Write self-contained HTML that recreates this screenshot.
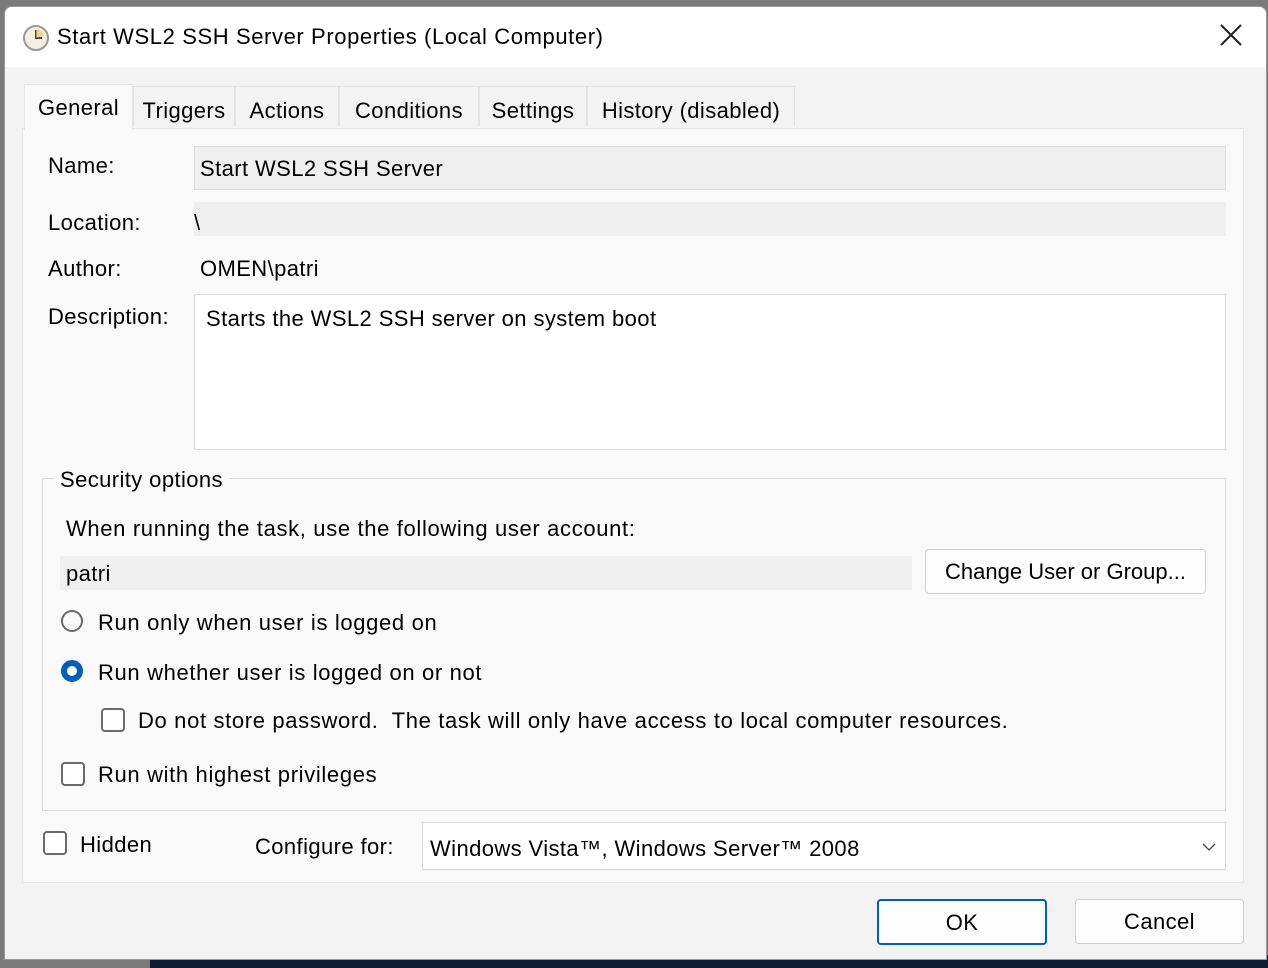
<!DOCTYPE html><html><head><style>
body{margin:0;width:1268px;height:968px;overflow:hidden;background:#7a7a7a;font-family:"Liberation Sans",sans-serif;font-size:22px;color:#000;position:relative;letter-spacing:0.4px}
.a{position:absolute}
#win{left:4px;top:6px;width:1261px;height:952px;background:#f3f3f3;border-radius:8px 8px 0 0;border:1px solid #999;overflow:hidden}
#title{left:0;top:0;width:1261px;height:60px;background:#fff}
.tab{top:86px;height:40px;background:#f3f3f3;border:1px solid #e3e3e3;border-bottom:none;line-height:48px;text-align:center;white-space:nowrap;box-sizing:border-box}
#panel{left:22px;top:128px;width:1220px;height:753px;background:#f9f9f9;border:1px solid #e6e6e6}
.ro{background:#efefef}
.box{background:#fff;border:1px solid #d9d9d9}
.btn{background:#fdfdfd;border:1px solid #d0d0d0;border-radius:4px;text-align:center}
.rad{width:22px;height:22px;border:2px solid #6a6a6a;border-radius:50%;box-sizing:border-box}
.chk{width:24px;height:24px;border:2px solid #6a6a6a;border-radius:4px;box-sizing:border-box;background:#fff}
.s{letter-spacing:0.65px}
</style></head><body>
<div class="a" style="left:150px;top:955px;width:1118px;height:13px;background:#0d1b33"></div>
<div id="win" class="a">
<div id="title" class="a"></div>
</div>
<svg class="a" style="left:22px;top:24px" width="28" height="28"><circle cx="14" cy="14" r="12" fill="#f4efe0" stroke="#999" stroke-width="2"/><path d="M14 6V14H20" stroke="#444" stroke-width="2" fill="none"/><path d="M14 14L14 5A9 9 0 0 1 22 12Z" fill="#e8c25a" opacity=".6"/></svg>
<div class="a" style="left:57px;top:24px;letter-spacing:0.6px">Start WSL2 SSH Server Properties (Local Computer)</div>
<svg class="a" style="left:1220px;top:24px" width="22" height="22"><path d="M1 1L21 21M21 1L1 21" stroke="#222" stroke-width="2"/></svg>
<div id="panel" class="a"></div>
<div class="a tab" style="left:133px;width:102px">Triggers</div>
<div class="a tab" style="left:235px;width:104px">Actions</div>
<div class="a tab" style="left:339px;width:140px">Conditions</div>
<div class="a tab" style="left:479px;width:108px">Settings</div>
<div class="a tab" style="left:587px;width:208px">History (disabled)</div>
<div class="a tab" style="left:24px;top:84px;width:109px;height:46px;background:#f9f9f9;line-height:46px;border-color:#e6e6e6">General</div>
<div class="a" style="left:48px;top:153px">Name:</div>
<div class="a ro" style="left:194px;top:146px;width:1030px;height:42px;border:1px solid #ddd"></div>
<div class="a" style="left:200px;top:156px">Start WSL2 SSH Server</div>
<div class="a" style="left:48px;top:210px">Location:</div>
<div class="a ro" style="left:194px;top:202px;width:1032px;height:34px"></div>
<div class="a" style="left:194px;top:210px">\</div>
<div class="a" style="left:48px;top:256px">Author:</div>
<div class="a" style="left:200px;top:256px">OMEN\patri</div>
<div class="a" style="left:48px;top:304px">Description:</div>
<div class="a box" style="left:194px;top:294px;width:1030px;height:154px"></div>
<div class="a" style="left:206px;top:306px">Starts the WSL2 SSH server on system boot</div>
<div class="a" style="left:42px;top:478px;width:1182px;height:331px;border:1px solid #dcdcdc"></div>
<div class="a" style="left:54px;top:467px;background:#f9f9f9;padding:0 6px">Security options</div>
<div class="a s" style="left:66px;top:516px">When running the task, use the following user account:</div>
<div class="a ro" style="left:60px;top:556px;width:852px;height:34px"></div>
<div class="a" style="left:66px;top:561px">patri</div>
<div class="a btn" style="left:925px;top:549px;width:279px;height:43px;line-height:44px;letter-spacing:0">Change User or Group...</div>
<div class="a rad" style="left:61px;top:610px"></div>
<div class="a s" style="left:98px;top:610px">Run only when user is logged on</div>
<div class="a rad" style="left:61px;top:660px;border:6px solid #005fb8;background:#fff"></div>
<div class="a s" style="left:98px;top:660px">Run whether user is logged on or not</div>
<div class="a chk" style="left:101px;top:708px"></div>
<div class="a s" style="left:138px;top:708px">Do not store password.&nbsp; The task will only have access to local computer resources.</div>
<div class="a chk" style="left:61px;top:762px"></div>
<div class="a s" style="left:98px;top:762px">Run with highest privileges</div>
<div class="a chk" style="left:43px;top:831px"></div>
<div class="a" style="left:80px;top:832px">Hidden</div>
<div class="a" style="left:255px;top:834px">Configure for:</div>
<div class="a box" style="left:422px;top:822px;width:802px;height:46px"></div>
<div class="a" style="left:430px;top:836px">Windows Vista™, Windows Server™ 2008</div>
<svg class="a" style="left:1202px;top:842px" width="14" height="10"><path d="M1 2L7 8L13 2" stroke="#444" stroke-width="1.3" fill="none"/></svg>
<div class="a btn" style="left:877px;top:899px;width:166px;height:42px;line-height:44px;border:2px solid #005fb8">OK</div>
<div class="a btn" style="left:1075px;top:899px;width:167px;height:43px;line-height:44px">Cancel</div>
</body></html>
